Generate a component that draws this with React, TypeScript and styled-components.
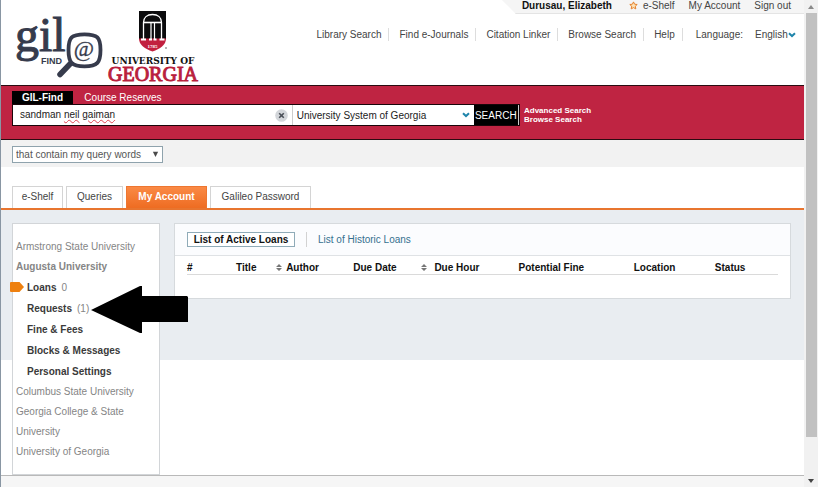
import React from "react";
import styled, { createGlobalStyle, css } from "styled-components";

const GlobalStyle = createGlobalStyle`
  * { box-sizing: border-box; }
  body { margin: 0; background: #fff; }
  body, button, input, select { font-family: "Liberation Sans", Arial, sans-serif; }
  a { color: inherit; text-decoration: none; }
  button { cursor: pointer; }
`;

const Shell = styled.div`
  display: flex;
  min-height: 100vh;
  font-size: 10px;
  color: #444;
`;

const Page = styled.div`
  flex: 1;
  min-width: 0;
  display: flex;
  flex-direction: column;
  border-left: 1px solid #8996a3;
`;

const ScrollTrack = styled.div`
  width: 14px;
  display: flex;
  flex-direction: column;
  align-items: center;
  background: #f1f1f1;
`;

const ScrollButton = styled.button`
  width: 14px;
  height: 13px;
  padding: 0;
  border: 0;
  background: none;
  display: flex;
  align-items: center;
  justify-content: center;
`;

const ScrollLane = styled.div`
  flex: 1;
  display: flex;
  flex-direction: column;
`;

const ScrollThumb = styled.div`
  width: 11px;
  flex: 92 0 0;
  background: #c1c1c1;
`;

const ScrollRest = styled.div`
  flex: 8 0 0;
`;

const Header = styled.header`
  display: flex;
  justify-content: space-between;
  height: 85px;
`;

const Logos = styled.div`
  display: flex;
  padding: 8px 0 0 12px;
  gap: 2px;
`;

const HeaderRight = styled.div`
  display: flex;
  flex-direction: column;
  align-items: flex-end;
`;

const UserBar = styled.div`
  display: flex;
  align-items: center;
  gap: 14px;
  height: 14px;
  padding: 0 13px 3px 20px;
  margin-left: auto;
  background: #f5f5f5;
  border-bottom: 1px solid #e4e4e4;
  clip-path: polygon(0 0, 100% 0, 100% 100%, 14px 100%);
`;

const UserName = styled.strong`
  color: #111;
  margin-right: 3px;
`;

const ShelfLink = styled.a`
  display: flex;
  align-items: center;
  gap: 5px;
`;

const MainNav = styled.nav`
  display: flex;
  align-items: center;
  padding: 14px 7px 0 0;
`;

const NavLink = styled.a`
  line-height: 13px;
  padding-right: 7px;
  margin-right: 10px;
  border-right: 1px solid #ddd;
`;

const LanguageField = styled.label`
  display: flex;
  align-items: center;
  gap: 12px;
  padding-left: 3px;
`;

const Picker = styled.span`
  position: relative;
  display: flex;
  align-items: center;
  flex: none;

  svg {
    position: absolute;
    right: 1px;
    pointer-events: none;
  }
`;

const PlainSelect = styled.select`
  appearance: none;
  border: 0;
  padding: 0;
  background: none;
  width: 42px;
  font-size: 10px;
  color: #444;
`;

const SearchBand = styled.section`
  height: 55px;
  padding: 5px 11px 0;
  background: #bf2442;
  border-top: 1px solid #2a0b11;
  border-bottom: 1px solid #2a0b11;
`;

const ScopeTabs = styled.div`
  display: flex;
  align-items: stretch;
  height: 13px;
`;

const ScopeTab = styled.button<{ $active?: boolean }>`
  border: 0;
  padding: 0;
  line-height: 13px;
  font-size: 10px;
  color: #fff;
  background: ${(p) => (p.$active ? "#000" : "none")};
  font-weight: ${(p) => (p.$active ? "bold" : "normal")};
  width: ${(p) => (p.$active ? "61px" : "100px")};
`;

const SearchRow = styled.div`
  display: flex;
  align-items: center;
  gap: 4px;
`;

const SearchForm = styled.form`
  display: flex;
  align-items: stretch;
  width: 508px;
  height: 22px;
  background: #fff;
  border: 1px solid #1a0509;
`;

const QueryField = styled.div`
  position: relative;
  flex: 278;
  min-width: 0;
  display: flex;
  align-items: center;
  padding-right: 4px;
  border-right: 1px solid #ccc;
`;

const queryText = css`
  font-size: 10px;
  line-height: 20px;
  padding: 0 0 0 7px;
`;

const QueryInput = styled.input`
  ${queryText}
  flex: 1;
  min-width: 0;
  border: 0;
  outline: 0;
  background: none;
  color: #222;
`;

const SpellingLayer = styled.div`
  ${queryText}
  position: absolute;
  left: 0;
  top: 0;
  color: transparent;
  pointer-events: none;
  white-space: pre;

  span {
    text-decoration: underline wavy #e0424f 1px;
  }
`;

const ClearButton = styled.button`
  display: flex;
  padding: 0;
  border: 0;
  background: none;
`;

const LibraryPicker = styled(Picker)`
  flex: 183;

  svg {
    right: 4px;
  }
`;

const LibrarySelect = styled(PlainSelect)`
  width: 100%;
  padding-left: 4px;
  color: #222;
`;

const SearchButton = styled.button`
  flex: 45;
  border: 0;
  border-right: 1px solid #ccc;
  padding: 0;
  background: #000;
  color: #fff;
  font-size: 10px;
`;

const SideLinks = styled.div`
  display: flex;
  flex-direction: column;
  color: #fff;
  font-size: 8px;
  font-weight: bold;
  line-height: 9px;
`;

const RefineBand = styled.section`
  height: 27px;
  padding: 6px 11px 0;
  background: #f2f2f2;
`;

const RefinePicker = styled(Picker)`
  width: 151px;

  svg {
    right: 4px;
  }
`;

const RefineSelect = styled(PlainSelect)`
  width: 100%;
  height: 17px;
  padding-left: 3px;
  border: 1px solid #8fa3ad;
  background: #fff;
  color: #555;
`;

const AccountTabs = styled.nav`
  display: flex;
  gap: 3px;
  padding: 19px 11px 0;
  border-bottom: 2px solid #e8752f;
`;

const AccountTab = styled.a<{ $active?: boolean; $width: number }>`
  height: 22px;
  line-height: 20px;
  min-width: ${(p) => p.$width}px;
  text-align: center;
  border: 1px solid ${(p) => (p.$active ? "#ee7630" : "#d4d4d4")};
  border-bottom: 0;
  ${(p) =>
    p.$active &&
    css`
      background: linear-gradient(#fa8a45, #ee6c22);
      color: #fff;
      font-weight: bold;
    `}
`;

const Content = styled.main`
  flex: 1;
  display: flex;
  align-items: flex-start;
  gap: 14px;
  padding: 13px 13px 0 11px;
  background: linear-gradient(#e9edf1 150px, #fff 150px);
`;

const Sidebar = styled.nav`
  flex: none;
  width: 148px;
  padding: 13px 0 12px 3px;
  background: #fff;
  border: 1px solid #d2d5d8;
`;

const Institutions = styled.ul`
  margin: 0;
  padding: 0;
  list-style: none;
  line-height: 20px;
  color: #858585;
`;

const Institution = styled.li<{ $current?: boolean }>`
  padding-right: 24px;

  > a {
    font-weight: ${(p) => (p.$current ? "bold" : "normal")};
  }
`;

const AccountMenu = styled.ul`
  margin: 0 -24px 0 0;
  padding: 0;
  list-style: none;
  line-height: 21px;
`;

const AccountItem = styled.li`
  position: relative;
  padding-left: 11px;

  a {
    font-weight: bold;
    color: #3a3a3a;
    margin-right: 5px;
  }
`;

const Marker = styled.svg`
  position: absolute;
  left: -6px;
  top: 5px;
`;

const Pointer = styled.svg`
  position: absolute;
  left: 74px;
  top: -12px;
`;

const Panel = styled.section`
  flex: 1;
  min-width: 0;
  background: #fff;
  border: 1px solid #d6dadd;
`;

const PanelTabs = styled.div`
  display: flex;
  align-items: center;
  gap: 11px;
  height: 32px;
  padding: 0 12px;
  background: #fbfcfe;
  border-bottom: 1px solid #dfe2e5;
`;

const ActiveList = styled.button`
  height: 15px;
  padding: 0 4px;
  border: 1px solid #8fabb8;
  background: #fff;
  color: #111;
  font-size: 10px;
  font-weight: bold;
  line-height: 13px;
  width: 108px;
`;

const Divider = styled.span`
  width: 1px;
  height: 15px;
  background: #d2d2d2;
`;

const HistoricLink = styled.a`
  color: #35708f;
`;

const TableWrap = styled.div`
  padding: 4px 12px 23px;
`;

const LoanTable = styled.table`
  width: 100%;
  border-collapse: collapse;
  table-layout: fixed;
`;

const HeadCell = styled.th<{ $width: number }>`
  width: ${(p) => p.$width}px;
  padding: 2px 0 0;
  text-align: left;
  line-height: 12px;
  white-space: nowrap;
  color: #111;
  border-bottom: 1px solid #dadada;
`;

const SortIcon = styled.svg<{ $gap: number }>`
  margin-right: ${(p) => p.$gap}px;
`;

const Footer = styled.footer`
  height: 12px;
  background: #f6f6f6;
  border-top: 1px solid #b9b9b9;
`;

const Chevron = () => (
  <svg width="8" height="6" viewBox="0 0 8 6" aria-hidden="true">
    <path d="M1 1.3 4 4.1 7 1.3" fill="none" stroke="#1f85ab" strokeWidth="2" />
  </svg>
);

const GilLogo = () => (
  <svg width="90" height="74" viewBox="13 8 90 74" role="img" aria-label="GIL Find">
    <text x="15" y="51" fontFamily="'Liberation Serif', serif" fontSize="48" fill="#363b4c" stroke="#363b4c" strokeWidth="1">gil</text>
    <text x="41" y="64" fontFamily="'Liberation Sans', sans-serif" fontSize="9" fontWeight="bold" fill="#363b4c">FIND</text>
    <path d="M70 64 60 74.500" stroke="#363b4c" strokeWidth="5.500" strokeLinecap="round" />
    <path d="M84.500 34.300C97.500 34.300 100.500 37.500 100.500 50S97.500 66.300 84.500 66.300 68.500 62.500 68.500 50 71.500 34.300 84.500 34.300Z" fill="#fff" stroke="#363b4c" strokeWidth="3.800" />
    <text x="84" y="56" textAnchor="middle" fontFamily="'Liberation Serif', serif" fontSize="22" fill="#363b4c" stroke="#363b4c" strokeWidth="0.300">@</text>
  </svg>
);

const GeorgiaLogo = () => (
  <svg width="98" height="76" viewBox="105 8 98 76" role="img" aria-label="University of Georgia">
    <path d="M139 11h27v28.500H139Z" fill="#0b0b0d" />
    <path d="M139 38.500h27c0 6.500-6 10.500-13.500 13-7.500-2.500-13.500-6.500-13.500-13Z" fill="#c2203f" />
    <g fill="none" stroke="#fff">
      <path d="M143.500 39V22.500C143.500 17.500 147 14.500 152.500 14.500S161.500 17.500 161.500 22.500V39" strokeWidth="1.300" />
      <path d="M143 22.500h19" strokeWidth="1.600" />
      <path d="M151 23v16M154.500 23v16" strokeWidth="1.200" />
      <path d="M141 39.500h5M149 39.500h3M153.500 39.500h3M159.500 39.500h5" strokeWidth="2.200" />
    </g>
    <text x="152.500" y="48" textAnchor="middle" fontFamily="'Liberation Serif', serif" fontSize="5" fontWeight="bold" fill="#fff">1785</text>
    <circle cx="166" cy="48" r="0.800" fill="#555" />
    <text x="153" y="64" textAnchor="middle" fontFamily="'DejaVu Serif', serif" fontSize="9" fontWeight="bold" fill="#111">UNIVERSITY OF</text>
    <text x="153" y="81" textAnchor="middle" fontFamily="'Liberation Serif', serif" fontSize="20" fill="#b91f3e" stroke="#b91f3e" strokeWidth="1">GEORGIA</text>
  </svg>
);

const navItems = ["Library Search", "Find e-Journals", "Citation Linker", "Browse Search", "Help"];

const accountTabs = [
  { label: "e-Shelf", width: 51 },
  { label: "Queries", width: 57 },
  { label: "My Account", width: 81, active: true },
  { label: "Galileo Password", width: 101 },
];

const columns: { label: string; width: number; sortGap?: number }[] = [
  { label: "#", width: 49 },
  { label: "Title", width: 40 },
  { label: "Author", width: 77, sortGap: 4 },
  { label: "Due Date", width: 68 },
  { label: "Due Hour", width: 97, sortGap: 7 },
  { label: "Potential Fine", width: 115 },
  { label: "Location", width: 81 },
  { label: "Status", width: 63 },
];

export default function App() {
  return (
    <>
      <GlobalStyle />
      <Shell>
        <Page>
          <Header>
            <Logos>
              <GilLogo />
              <GeorgiaLogo />
            </Logos>
            <HeaderRight>
              <UserBar>
                <UserName>Durusau, Elizabeth</UserName>
                <ShelfLink href="#shelf">
                  <svg width="9" height="9" viewBox="0 0 9 9" aria-hidden="true">
                    <path d="M4.500 .9 5.600 3.200 8.200 3.500 6.300 5.200 6.800 7.900 4.500 6.600 2.200 7.900 2.700 5.200 .8 3.500 3.400 3.200Z" fill="#fde3b8" stroke="#e5822d" />
                  </svg>
                  e-Shelf
                </ShelfLink>
                <a href="#account">My Account</a>
                <a href="#signout">Sign out</a>
              </UserBar>
              <MainNav>
                {navItems.map((item) => (
                  <NavLink key={item} href="#nav">{item}</NavLink>
                ))}
                <LanguageField>
                  Language:
                  <Picker>
                    <PlainSelect defaultValue="English">
                      <option>English</option>
                    </PlainSelect>
                    <Chevron />
                  </Picker>
                </LanguageField>
              </MainNav>
            </HeaderRight>
          </Header>

          <SearchBand>
            <ScopeTabs>
              <ScopeTab $active>GIL-Find</ScopeTab>
              <ScopeTab>Course Reserves</ScopeTab>
            </ScopeTabs>
            <SearchRow>
              <SearchForm onSubmit={(e) => e.preventDefault()}>
                <QueryField>
                  <QueryInput aria-label="Search terms" defaultValue="sandman neil gaiman" spellCheck={false} />
                  <SpellingLayer aria-hidden="true">
                    sandman <span>neil</span> <span>gaiman</span>
                  </SpellingLayer>
                  <ClearButton type="reset" aria-label="Clear">
                    <svg width="13" height="13" viewBox="0 0 13 13" aria-hidden="true">
                      <circle cx="6.500" cy="6.500" r="6.300" fill="#d3d6da" />
                      <path d="m4.200 4.200 4.600 4.600m0-4.600-4.600 4.600" stroke="#4a4f57" strokeWidth="1.600" />
                    </svg>
                  </ClearButton>
                </QueryField>
                <LibraryPicker>
                  <LibrarySelect aria-label="Library" defaultValue="University System of Georgia">
                    <option>University System of Georgia</option>
                  </LibrarySelect>
                  <Chevron />
                </LibraryPicker>
                <SearchButton type="submit">SEARCH</SearchButton>
              </SearchForm>
              <SideLinks>
                <a href="#advanced">Advanced Search</a>
                <a href="#browse">Browse Search</a>
              </SideLinks>
            </SearchRow>
          </SearchBand>

          <RefineBand>
            <RefinePicker>
              <RefineSelect aria-label="Match" defaultValue="that contain my query words">
                <option>that contain my query words</option>
              </RefineSelect>
              <svg width="7" height="7" viewBox="0 0 7 7" aria-hidden="true">
                <path d="M.9.800h5.200L3.500 6Z" fill="#4a4a4a" />
              </svg>
            </RefinePicker>
          </RefineBand>

          <AccountTabs>
            {accountTabs.map(({ label, width, active }) => (
              <AccountTab key={label} href="#tab" $width={width} $active={active}>{label}</AccountTab>
            ))}
          </AccountTabs>

          <Content>
            <Sidebar>
              <Institutions>
                <Institution><a href="#armstrong">Armstrong State University</a></Institution>
                <Institution $current>
                  <a href="#augusta">Augusta University</a>
                  <AccountMenu>
                    <AccountItem>
                      <Marker width="14" height="10" viewBox="0 0 14 10" aria-hidden="true">
                        <path d="M1 0h8.500L14 5 9.500 10H1Q0 10 0 9V1Q0 0 1 0Z" fill="#ee800f" />
                      </Marker>
                      <a href="#loans">Loans</a>0
                    </AccountItem>
                    <AccountItem>
                      <a href="#requests">Requests</a>(1)
                      <Pointer width="98" height="48" viewBox="0 0 98 48" aria-hidden="true">
                        <path d="M1 24 50 0h2v10h45l1 1v25H52v11h-2Z" fill="#000" />
                      </Pointer>
                    </AccountItem>
                    <AccountItem><a href="#fines">Fine &amp; Fees</a></AccountItem>
                    <AccountItem><a href="#blocks">Blocks &amp; Messages</a></AccountItem>
                    <AccountItem><a href="#settings">Personal Settings</a></AccountItem>
                  </AccountMenu>
                </Institution>
                <Institution><a href="#columbus">Columbus State University</a></Institution>
                <Institution><a href="#gcsu">Georgia College &amp; State University</a></Institution>
                <Institution><a href="#uga">University of Georgia</a></Institution>
              </Institutions>
            </Sidebar>

            <Panel>
              <PanelTabs>
                <ActiveList>List of Active Loans</ActiveList>
                <Divider />
                <HistoricLink href="#historic">List of Historic Loans</HistoricLink>
              </PanelTabs>
              <TableWrap>
                <LoanTable>
                  <thead>
                    <tr>
                      {columns.map(({ label, width, sortGap }) => (
                        <HeadCell key={label} $width={width} scope="col">
                          {sortGap && (
                            <SortIcon $gap={sortGap} width="6" height="7" viewBox="0 0 6 7" aria-hidden="true">
                              <path d="M0 3 3 0l3 3ZM0 4l3 3 3-3Z" fill="#777" />
                            </SortIcon>
                          )}
                          {label}
                        </HeadCell>
                      ))}
                    </tr>
                  </thead>
                </LoanTable>
              </TableWrap>
            </Panel>
          </Content>
          <Footer />
        </Page>

        <ScrollTrack>
          <ScrollButton aria-label="Scroll up">
            <svg width="6" height="4" viewBox="0 0 6 4" aria-hidden="true"><path d="M0 4 3 0l3 4Z" fill="#8a8a8a" /></svg>
          </ScrollButton>
          <ScrollLane>
            <ScrollThumb />
            <ScrollRest />
          </ScrollLane>
          <ScrollButton aria-label="Scroll down">
            <svg width="6" height="4" viewBox="0 0 6 4" aria-hidden="true"><path d="M0 0h6L3 4Z" fill="#444" /></svg>
          </ScrollButton>
        </ScrollTrack>
      </Shell>
    </>
  );
}
